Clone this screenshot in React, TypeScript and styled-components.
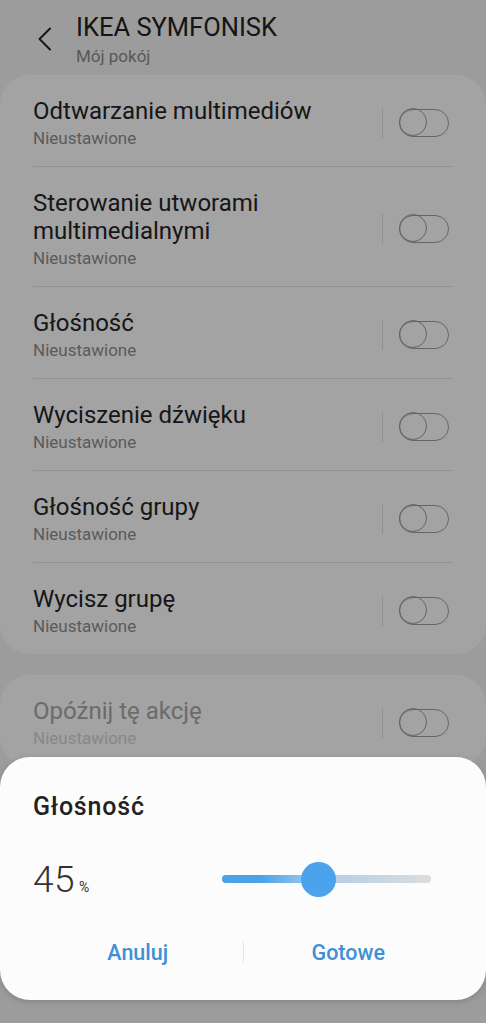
import styled, { createGlobalStyle } from "styled-components";

const GlobalStyle = createGlobalStyle`
  html, body {
    margin: 0;
    padding: 0;
    background: #f5f5f5;
    font-family: Roboto, "Noto Sans", sans-serif;
    -webkit-font-smoothing: antialiased;
  }
`;

const Screen = styled.div`
  width: 486px;
  height: 1023px;
  overflow: hidden;
  background: #f5f5f5;
  position: relative;
`;

const Header = styled.header`
  display: flex;
  align-items: flex-start;
  padding: 12px 0 0 30px;
  height: 75px;
  box-sizing: border-box;
`;

const BackButton = styled.button`
  width: 30px;
  height: 24px;
  margin: 15px 16px 0 0;
  padding: 0;
  border: 0;
  background: none;
  display: flex;
  align-items: center;
  justify-content: center;
`;

const HeaderText = styled.div`
  display: flex;
  flex-direction: column;
`;

const Title = styled.h1`
  margin: 0;
  font-size: 25.5px;
  font-weight: 400;
  line-height: 30px;
  color: #222;
`;

const Subtitle = styled.div`
  font-size: 17px;
  line-height: 20px;
  margin-top: 4px;
  color: #8a8a8a;
`;

const Card = styled.section<{ $gap?: number }>`
  background: #fff;
  border-radius: 30px;
  margin-top: ${(p) => p.$gap ?? 0}px;
  padding: 0 33px;
`;

const Row = styled.div`
  display: flex;
  align-items: center;
  padding: 22px 4px 18px 0;
  border-bottom: 1px solid #e4e4e4;
  &:last-child {
    border-bottom: 0;
  }
`;

const RowText = styled.div`
  flex: 1;
  min-width: 0;
`;

const RowTitle = styled.div<{ $disabled?: boolean }>`
  font-size: 24px;
  line-height: 28px;
  color: ${(p) => (p.$disabled ? "#a8a8a8" : "#252525")};
  padding-right: 30px;
`;

const RowSub = styled.div<{ $disabled?: boolean }>`
  font-size: 17px;
  line-height: 20px;
  margin-top: 3px;
  color: ${(p) => (p.$disabled ? "#d4d4d4" : "#8f8f8f")};
`;

const Sep = styled.div`
  width: 1px;
  height: 30px;
  background: #e2e2e2;
  margin-right: 16px;
`;

const Toggle = styled.div`
  width: 50px;
  height: 28px;
  position: relative;
  box-sizing: border-box;
  border: 1.5px solid #9e9e9e;
  border-radius: 14px;
  &::before {
    content: "";
    position: absolute;
    left: -1.5px;
    top: -1.5px;
    width: 28px;
    height: 28px;
    box-sizing: border-box;
    border: 1.5px solid #9e9e9e;
    border-radius: 50%;
    background: inherit;
  }
`;

const Scrim = styled.div`
  position: absolute;
  inset: 0;
  background: rgba(0, 0, 0, 0.36);
`;

const Dialog = styled.div`
  position: absolute;
  left: 0;
  right: 0;
  top: 757px;
  height: 243px;
  background: #fcfcfc;
  border-radius: 30px;
  box-shadow: 0 2px 6px rgba(0, 0, 0, 0.15);
  padding: 36px 33px 0;
  box-sizing: border-box;
  display: flex;
  flex-direction: column;
`;

const DialogTitle = styled.div`
  font-size: 25px;
  font-weight: 500;
  line-height: 28px;
  letter-spacing: 0.8px;
  color: #222;
`;

const ValueRow = styled.div`
  display: flex;
  align-items: center;
  margin-top: 36px;
  height: 44px;
`;

const Value = styled.div`
  display: flex;
  align-items: baseline;
  width: 189px;
  color: #333;
`;

const Number = styled.span`
  font-size: 37px;
  font-weight: 300;
  letter-spacing: 0.5px;
`;

const Unit = styled.span`
  font-size: 14px;
  margin-left: 4px;
`;

const Track = styled.div`
  position: relative;
  width: 209px;
  height: 8px;
  border-radius: 4px;
  background: #dcdcdc;
`;

const Fill = styled.div`
  height: 100%;
  border-radius: 4px;
  background: linear-gradient(90deg, #4ba2ea 0%, #4ba2ea 40%, #8bbfe8 80%, #a9cde9 100%);
`;

const Rest = styled.div`
  position: absolute;
  top: 0;
  bottom: 0;
  right: 0;
  border-radius: 4px;
  background: linear-gradient(90deg, #afcde8 0%, #dcdddf 100%);
`;

const Thumb = styled.div`
  position: absolute;
  top: 50%;
  width: 35px;
  height: 35px;
  margin: -17.5px 0 0 -17.5px;
  border-radius: 50%;
  background: #4aa3ec;
`;

const Buttons = styled.div`
  display: flex;
  align-items: center;
  margin-top: 36px;
`;

const ActionButton = styled.button`
  flex: 1;
  border: 0;
  background: none;
  font-family: inherit;
  font-size: 21.5px;
  font-weight: 500;
  color: #3f90d4;
  padding: 0;
  height: 30px;
`;

const ButtonSep = styled.div`
  width: 1px;
  height: 22px;
  background: #e4e4e4;
`;

const actions = [
  { title: "Odtwarzanie multimediów" },
  { title: "Sterowanie utworami multimedialnymi" },
  { title: "Głośność" },
  { title: "Wyciszenie dźwięku" },
  { title: "Głośność grupy" },
  { title: "Wycisz grupę" },
];

const volume = 45;

function ActionRow({ title, disabled }: { title: string; disabled?: boolean }) {
  return (
    <Row>
      <RowText>
        <RowTitle $disabled={disabled}>{title}</RowTitle>
        <RowSub $disabled={disabled}>Nieustawione</RowSub>
      </RowText>
      <Sep />
      <Toggle />
    </Row>
  );
}

export default function App() {
  const pos = (volume / 100) * 209 + 2;
  return (
    <Screen>
      <GlobalStyle />
      <Header>
        <BackButton aria-label="Wstecz">
          <svg width="16" height="24" viewBox="0 0 16 24">
            <path d="M13 1.5 L2.5 12 L13 22.5" fill="none" stroke="#222" strokeWidth="2" strokeLinecap="round" strokeLinejoin="round" />
          </svg>
        </BackButton>
        <HeaderText>
          <Title>IKEA SYMFONISK</Title>
          <Subtitle>Mój pokój</Subtitle>
        </HeaderText>
      </Header>
      <Card>
        {actions.map((a) => (
          <ActionRow key={a.title} title={a.title} />
        ))}
      </Card>
      <Card $gap={21}>
        <ActionRow title="Opóźnij tę akcję" disabled />
      </Card>

      <Scrim />
      <Dialog>
        <DialogTitle>Głośność</DialogTitle>
        <ValueRow>
          <Value>
            <Number>{volume}</Number>
            <Unit>%</Unit>
          </Value>
          <Track>
            <Fill style={{ width: pos }} />
            <Rest style={{ left: pos }} />
            <Thumb style={{ left: pos }} />
          </Track>
        </ValueRow>
        <Buttons>
          <ActionButton>Anuluj</ActionButton>
          <ButtonSep />
          <ActionButton>Gotowe</ActionButton>
        </Buttons>
      </Dialog>
    </Screen>
  );
}
